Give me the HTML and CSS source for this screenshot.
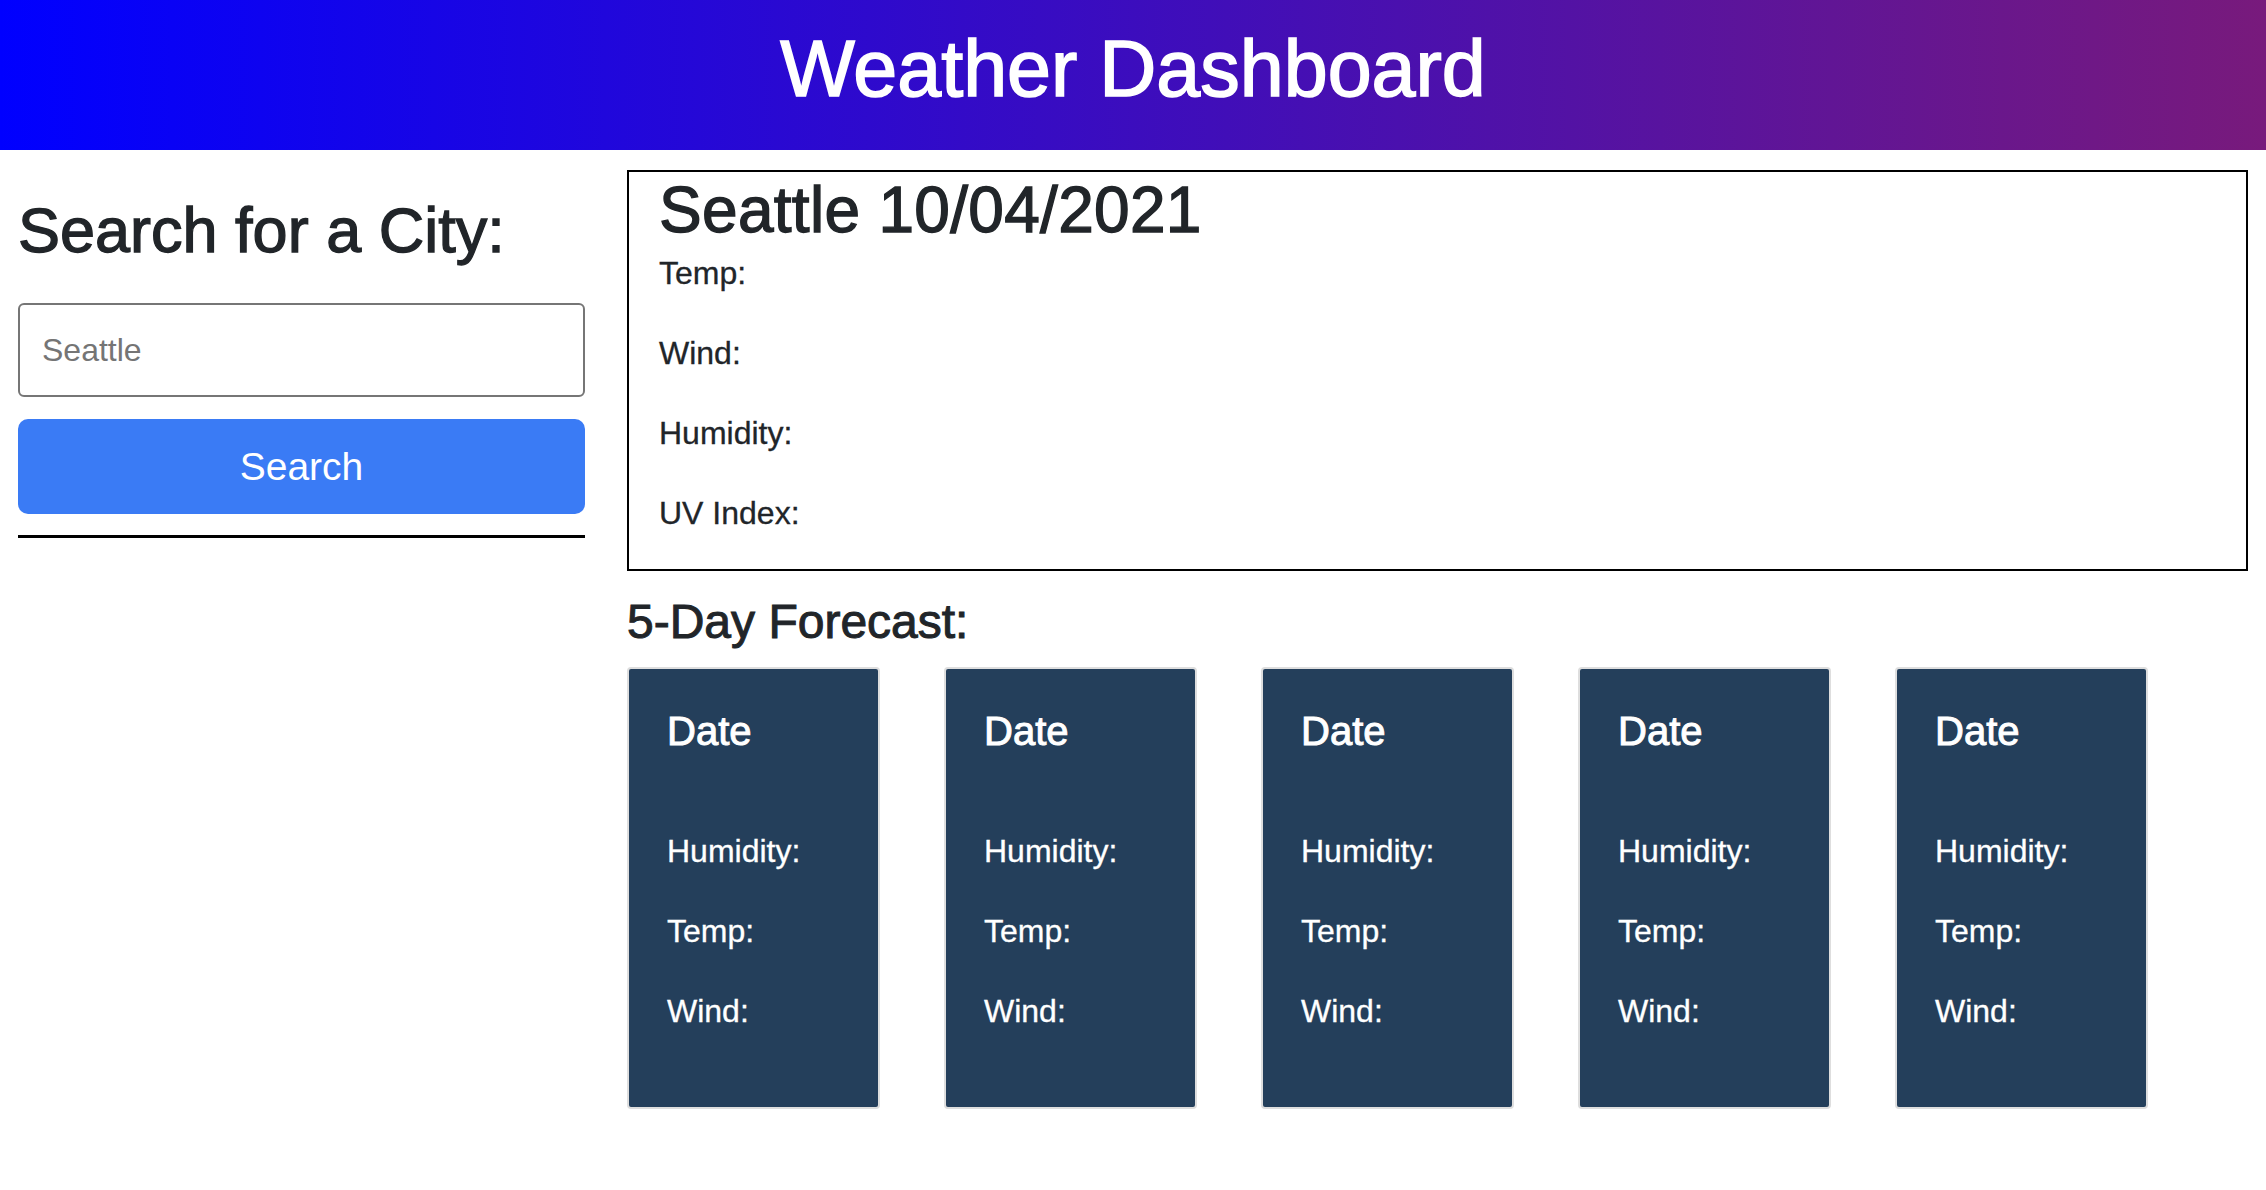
FILE: index.html
```html
<!DOCTYPE html>
<html lang="en">
<head>
<meta charset="utf-8">
<title>Weather Dashboard</title>
<link rel="stylesheet" href="styles.css">
</head>
<body>
<header class="site-header">
  <h1 class="site-title">Weather Dashboard</h1>
</header>
<main class="layout">
  <aside class="search-panel">
    <h2 class="search-title">Search for a City:</h2>
    <input class="search-input" type="text" placeholder="Seattle">
    <button class="search-button" type="button">Search</button>
    <hr class="search-divider">
  </aside>
  <section class="weather">
    <div class="current">
      <h2 class="current-title">Seattle 10/04/2021</h2>
      <p class="current-line">Temp:</p>
      <p class="current-line">Wind:</p>
      <p class="current-line">Humidity:</p>
      <p class="current-line">UV Index:</p>
    </div>
    <h4 class="forecast-title">5-Day Forecast:</h4>
    <div class="forecast">
      <div class="card"><h5 class="card-date">Date</h5><p class="card-line">Humidity:</p><p class="card-line">Temp:</p><p class="card-line">Wind:</p></div>
      <div class="card"><h5 class="card-date">Date</h5><p class="card-line">Humidity:</p><p class="card-line">Temp:</p><p class="card-line">Wind:</p></div>
      <div class="card"><h5 class="card-date">Date</h5><p class="card-line">Humidity:</p><p class="card-line">Temp:</p><p class="card-line">Wind:</p></div>
      <div class="card"><h5 class="card-date">Date</h5><p class="card-line">Humidity:</p><p class="card-line">Temp:</p><p class="card-line">Wind:</p></div>
      <div class="card"><h5 class="card-date">Date</h5><p class="card-line">Humidity:</p><p class="card-line">Temp:</p><p class="card-line">Wind:</p></div>
    </div>
  </section>
</main>
</body>
</html>
```
FILE: styles.css
```css
* { box-sizing: border-box; }
html, body { margin: 0; padding: 0; background: #fff; }
body {
  font-family: "Liberation Sans", Helvetica, Arial, sans-serif;
  color: #212529;
}
.site-header {
  height: 150px;
  padding-top: 21px;
  background: linear-gradient(to right, #0000ff, #781a7c);
  text-align: center;
  color: #fff;
}
.site-title {
  margin: 0;
  font-size: 79px;
  line-height: 96px;
  font-weight: 500;
  -webkit-text-stroke: 1.6px currentColor;
}
.layout {
  display: flex;
  gap: 42px;
  padding: 20px 18px 0;
}
.search-panel {
  width: 567px;
  flex: none;
  padding-top: 22px;
}
.search-title {
  margin: 0 0 34px;
  font-size: 63px;
  line-height: 77px;
  font-weight: 500;
  -webkit-text-stroke: 1.3px currentColor;
}
.search-input {
  display: block;
  width: 100%;
  height: 94px;
  margin: 0;
  padding: 0 22px;
  border: 2px solid #767676;
  border-radius: 6px;
  font-family: inherit;
  font-size: 32px;
  color: #212529;
  background: #fff;
}
.search-input::placeholder { color: #757575; }
.search-button {
  display: block;
  width: 100%;
  height: 95px;
  margin: 22px 0 0;
  border: none;
  border-radius: 10px;
  background: #3a7bf5;
  color: #fff;
  font-family: inherit;
  font-size: 39px;
}
.search-divider {
  margin: 21px 0 0;
  border: 0;
  border-top: 3px solid #000;
  opacity: 1;
}
.weather { flex: 1; min-width: 0; }
.current {
  border: 2px solid #000;
  padding: 0 0 0 30px;
}
.current-title {
  margin: 0;
  font-size: 64px;
  line-height: 77px;
  font-weight: 500;
  letter-spacing: 0.3px;
  -webkit-text-stroke: 1.3px currentColor;
}
.current-line {
  margin: 0 0 32px;
  font-size: 32px;
  line-height: 48px;
  -webkit-text-stroke: 0.3px currentColor;
}
.current-line:last-child { margin-bottom: 32px; }
.forecast-title {
  margin: 22px 0 16px;
  font-size: 48px;
  line-height: 58px;
  font-weight: 500;
  -webkit-text-stroke: 1px currentColor;
}
.forecast {
  display: flex;
  gap: 64px;
}
.card {
  width: 253px;
  flex: none;
  padding: 38px 38px 40px;
  background: #243f5b;
  border: 2px solid #dedede;
  border-radius: 4px;
  color: #fff;
}
.card-date {
  margin: 0 0 72px;
  font-size: 40px;
  line-height: 48px;
  font-weight: 500;
  -webkit-text-stroke: 1px currentColor;
}
.card-line {
  margin: 0 0 32px;
  font-size: 32px;
  line-height: 48px;
  -webkit-text-stroke: 0.3px currentColor;
}
```
